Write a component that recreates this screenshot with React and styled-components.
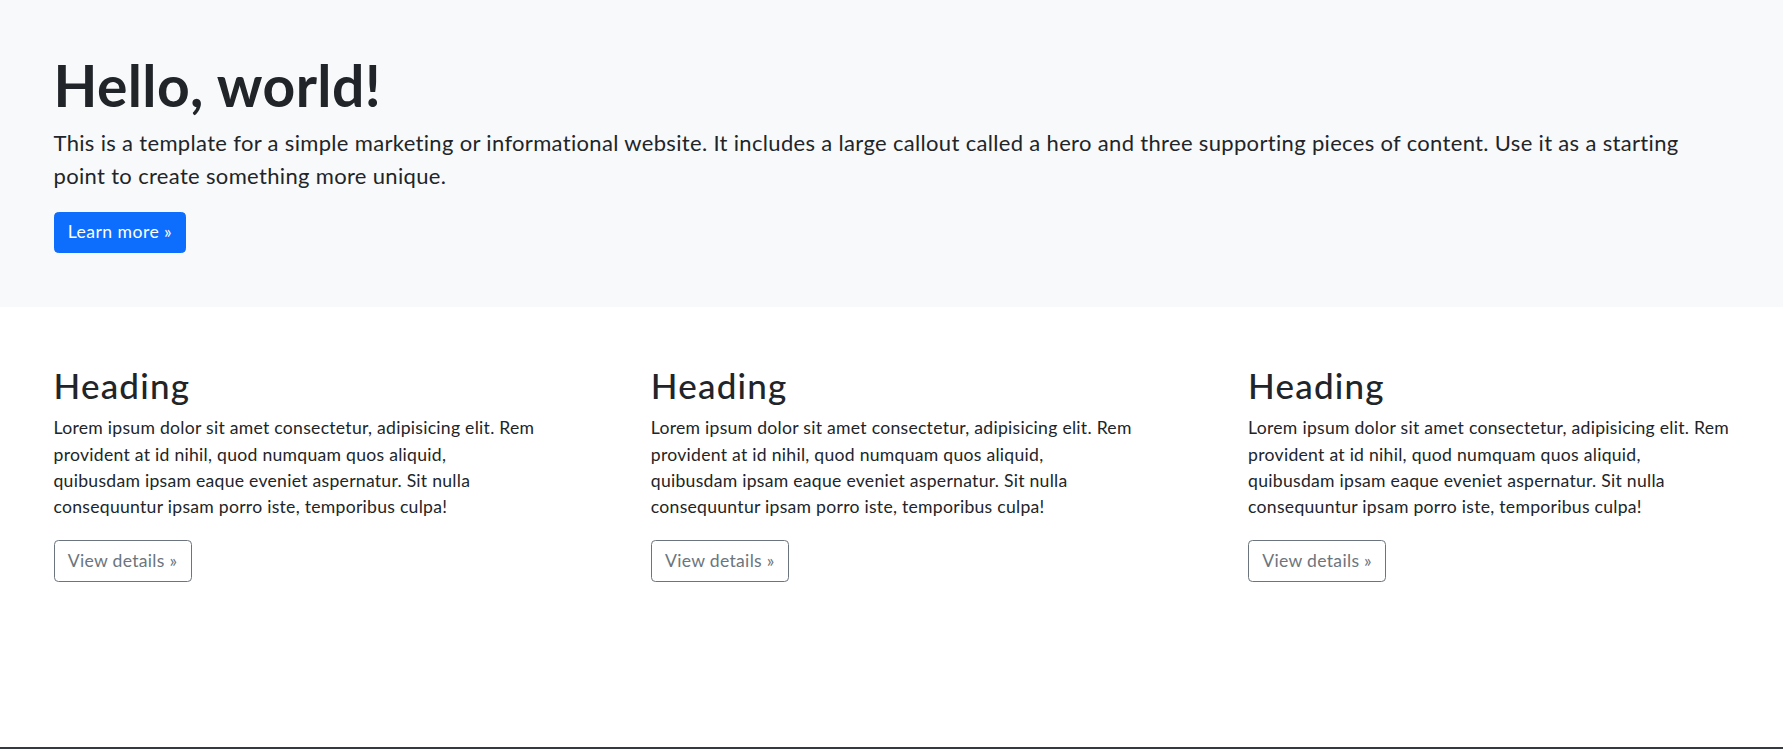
import React from 'react';
import styled, { createGlobalStyle } from 'styled-components';

const GlobalStyle = createGlobalStyle`
  html, body {
    margin: 0;
    padding: 0;
  }
  body {
    font-family: Lato, "Open Sans", "Liberation Sans", sans-serif;
    color: #212529;
    background: #fff;
    -webkit-font-smoothing: antialiased;
  }
  * {
    box-sizing: border-box;
  }
`;

const Page = styled.div`
  display: flex;
  flex-direction: column;
  min-height: 100vh;
`;

const Hero = styled.section`
  background-color: #f8f9fa;
  padding: 51px 53.5px 54px;
`;

const HeroTitle = styled.h1`
  margin: 0 0 6.5px;
  font-size: 57px;
  line-height: 68px;
  font-weight: 700;
  letter-spacing: 0.4px;
`;

const Lead = styled.p`
  margin: 0 0 20px;
  font-size: 22px;
  line-height: 33px;
  font-weight: 400;
  letter-spacing: 0.33px;
  white-space: nowrap;
`;

const Button = styled.a`
  display: inline-block;
  padding: 6.6px 13.2px;
  font-size: 17.6px;
  line-height: 26.4px;
  letter-spacing: ${({ $variant }) => ($variant === 'primary' ? '0.45px' : '0.3px')};
  border-radius: 4.4px;
  border: 1px solid ${({ $variant }) => ($variant === 'primary' ? '#0d6efd' : '#6c757d')};
  background-color: ${({ $variant }) => ($variant === 'primary' ? '#0d6efd' : 'transparent')};
  color: ${({ $variant }) => ($variant === 'primary' ? '#fff' : '#6c757d')};
  text-decoration: none;
  cursor: pointer;
`;

const Features = styled.main`
  display: grid;
  grid-template-columns: repeat(3, 520px);
  column-gap: 77.3px;
  padding: 56.5px 53.5px 165px;
`;

const Feature = styled.div`
  display: flex;
  flex-direction: column;
  align-items: flex-start;
`;

const FeatureTitle = styled.h2`
  margin: 0 0 9.5px;
  font-size: 35px;
  line-height: 42px;
  font-weight: 500;
  letter-spacing: 1.2px;
`;

const FeatureText = styled.p`
  margin: 0 0 19.5px;
  font-size: 17.6px;
  line-height: 26.4px;
  letter-spacing: 0.27px;
  white-space: nowrap;
`;

const Footer = styled.footer`
  margin-top: auto;
  height: 80px;
  background-color: #343a40;
`;

const loremLines = [
  'Lorem ipsum dolor sit amet consectetur, adipisicing elit. Rem',
  'provident at id nihil, quod numquam quos aliquid,',
  'quibusdam ipsam eaque eveniet aspernatur. Sit nulla',
  'consequuntur ipsam porro iste, temporibus culpa!',
];

const features = [1, 2, 3];

function Lines({ lines }) {
  return lines.map((line, i) => (
    <React.Fragment key={i}>
      {line}
      {i < lines.length - 1 && <br />}
    </React.Fragment>
  ));
}

export default function App() {
  return (
    <>
      <GlobalStyle />
      <Page>
        <Hero>
          <HeroTitle>Hello, world!</HeroTitle>
          <Lead>
            <Lines
              lines={[
                'This is a template for a simple marketing or informational website. It includes a large callout called a hero and three supporting pieces of content. Use it as a starting',
                'point to create something more unique.',
              ]}
            />
          </Lead>
          <Button $variant="primary" href="#">Learn more »</Button>
        </Hero>
        <Features>
          {features.map((n) => (
            <Feature key={n}>
              <FeatureTitle>Heading</FeatureTitle>
              <FeatureText>
                <Lines lines={loremLines} />
              </FeatureText>
              <Button $variant="secondary" href="#">View details »</Button>
            </Feature>
          ))}
        </Features>
        <Footer />
      </Page>
    </>
  );
}
